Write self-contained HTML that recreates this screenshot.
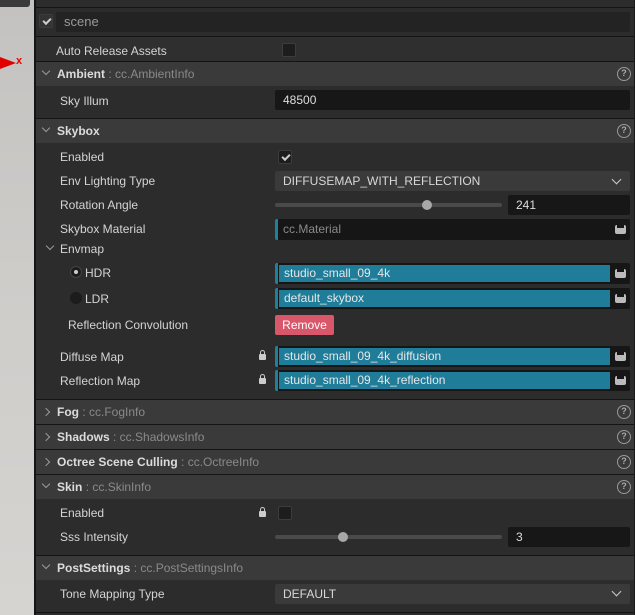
<!DOCTYPE html>
<html><head><meta charset="utf-8"><style>
*{box-sizing:border-box;margin:0;padding:0}
body{width:635px;height:615px;overflow:hidden;background:#2c2c2c;font-family:"Liberation Sans",sans-serif;font-size:12px;color:#d4d4d4;position:relative}
.a{position:absolute}
.strip{left:0;top:0;width:34px;height:615px;background:linear-gradient(#c3c2c0,#cfcdca 50%,#d6d4d1)}
.vl{left:34px;top:0;width:2px;height:615px;background:#151515}
.panel{left:36px;top:0;width:598px;height:615px;background:#2c2c2c}
.rb{left:634px;top:0;width:1px;height:615px;background:#1a1a1a}
.hl{left:36px;width:598px;height:1px;background:#141414}
.hdr{left:36px;width:598px;height:24px;background:#3a3a3a}
.ht{left:57px;font-weight:bold;color:#dcdcdc;font-size:12px;line-height:24px}
.ht span{font-weight:normal;color:#8a8a8a}
.car{left:43px;width:6px;height:6px;border-right:1.5px solid #999;border-bottom:1.5px solid #999}
.q{left:617px;width:14px;height:14px;border:1.5px solid #999;border-radius:50%;color:#aaa;font-size:9px;line-height:11px;text-align:center;font-weight:bold}
.lb{left:60px;line-height:16px}
.cb{width:14px;height:14px;background:#1d1d1d;border:1px solid #3c3c3c;border-radius:2px}
.inp{background:#171717;border-radius:2px;line-height:20px;padding-left:8px;height:20px}
.sel{background:#3a3a3a;border-radius:2px;line-height:20px;padding-left:8px;height:20px;color:#d8d8d8}
.asset{height:21px;background:#161616;border-left:3px solid #1f7f9e;border-radius:2px}
.asset .f{position:absolute;left:1px;top:2px;height:17px;right:20px;background:#1f7d9a;color:#e6e6e6;line-height:17px;padding-left:5px}
.asset .bx{position:absolute;right:4px;top:6px;width:11px;height:9px;border-radius:2px;background:#bbb}
.asset .bx:after{content:"";position:absolute;left:2px;top:0;width:7px;height:3px;background:#161616}
.lock{width:7px;height:6px;background:#ccc;border-radius:1px}
.lock:before{content:"";position:absolute;left:1px;top:-4px;width:3px;height:4px;border:1.2px solid #ccc;border-bottom:none;border-radius:3px 3px 0 0}
.chk:after{content:"";position:absolute;left:3px;width:6px;height:3px;border-left:2px solid #ccc;border-bottom:2px solid #ccc;transform:rotate(-45deg);top:3px}
.track{height:4px;background:#4a4a4a;border-radius:2px}
.knob{width:10px;height:10px;border-radius:50%;background:#a8a8a8}
.dd{width:7px;height:7px;border-right:1.5px solid #ccc;border-bottom:1.5px solid #ccc;transform:rotate(45deg)}
</style></head><body>
<div class="a strip"></div>
<div class="a" style="left:0;top:0;width:30px;height:7px;background:#3a3a3a;border-radius:0 0 3px 0"></div>
<div class="a" style="left:0;top:57px;width:0;height:0;border-top:6px solid transparent;border-bottom:6px solid transparent;border-left:16px solid #e00000"></div>
<div class="a" style="left:16px;top:55px;color:#e00;font-weight:bold;font-size:11px">x</div>
<div class="a vl"></div>
<div class="a panel"></div>
<div class="a rb"></div>

<div class="a hl" style="top:7px"></div>
<div class="a cb chk" style="left:39px;top:14px;background:#333"></div>
<div class="a inp" style="left:56px;top:12px;width:574px;background:#232323;color:#9a9a9a;font-size:13px">scene</div>
<div class="a hl" style="top:36px"></div>
<div class="a" style="left:36px;top:37px;width:598px;height:24px;background:#2f2f2f"></div>
<div class="a lb" style="left:56px;top:43px">Auto Release Assets</div>
<div class="a cb" style="left:282px;top:43px"></div>

<div class="a hl" style="top:61px"></div>
<div class="a hdr" style="top:62px"></div>
<div class="a car" style="top:68px;transform:rotate(45deg)"></div>
<div class="a ht" style="top:62px">Ambient <span>: cc.AmbientInfo</span></div>
<div class="a q" style="top:67px">?</div>
<div class="a lb" style="top:93px">Sky Illum</div>
<div class="a inp" style="left:275px;top:90px;width:355px;color:#ddd">48500</div>

<div class="a hl" style="top:118px"></div>
<div class="a hdr" style="top:119px"></div>
<div class="a car" style="top:125px;transform:rotate(45deg)"></div>
<div class="a ht" style="top:119px">Skybox</div>
<div class="a q" style="top:124px">?</div>

<div class="a lb" style="top:149px">Enabled</div>
<div class="a cb chk" style="left:278px;top:150px"></div>
<div class="a lb" style="top:173px">Env Lighting Type</div>
<div class="a sel" style="left:275px;top:171px;width:355px">DIFFUSEMAP_WITH_REFLECTION</div>
<div class="a dd" style="left:613px;top:176px"></div>
<div class="a lb" style="top:197px">Rotation Angle</div>
<div class="a track" style="left:275px;top:203px;width:227px"></div>
<div class="a knob" style="left:422px;top:200px"></div>
<div class="a inp" style="left:508px;top:195px;width:122px;color:#ddd">241</div>
<div class="a lb" style="top:221px">Skybox Material</div>
<div class="a asset" style="left:275px;top:219px;width:355px;background:#161616"><div style="position:absolute;left:5px;top:2px;line-height:16px;color:#8a8a8a">cc.Material</div><div class="bx"></div></div>

<div class="a car" style="left:47px;top:243px;transform:rotate(45deg)"></div>
<div class="a lb" style="left:60px;top:241px">Envmap</div>
<div class="a" style="left:70px;top:266px;width:12px;height:12px;border-radius:50%;background:#1c1c1c;border:1px solid #444"></div>
<div class="a" style="left:74px;top:270px;width:4px;height:4px;border-radius:50%;background:#ccc"></div>
<div class="a lb" style="left:85px;top:265px">HDR</div>
<div class="a asset" style="left:275px;top:263px;width:355px"><div class="f">studio_small_09_4k</div><div class="bx"></div></div>
<div class="a" style="left:70px;top:292px;width:12px;height:12px;border-radius:50%;background:#1c1c1c"></div>
<div class="a lb" style="left:85px;top:291px">LDR</div>
<div class="a asset" style="left:275px;top:288px;width:355px"><div class="f">default_skybox</div><div class="bx"></div></div>
<div class="a lb" style="left:68px;top:317px">Reflection Convolution</div>
<div class="a" style="left:275px;top:315px;width:59px;height:20px;background:#d9576a;border-radius:2px;color:#fff;text-align:center;line-height:20px">Remove</div>

<div class="a lb" style="top:349px">Diffuse Map</div>
<div class="a lock" style="left:259px;top:354px"></div>
<div class="a asset" style="left:275px;top:346px;width:355px"><div class="f">studio_small_09_4k_diffusion</div><div class="bx"></div></div>
<div class="a lb" style="top:373px">Reflection Map</div>
<div class="a lock" style="left:259px;top:378px"></div>
<div class="a asset" style="left:275px;top:370px;width:355px"><div class="f">studio_small_09_4k_reflection</div><div class="bx"></div></div>

<div class="a hl" style="top:399px"></div>
<div class="a hdr" style="top:400px"></div>
<div class="a car" style="top:409px;transform:rotate(-45deg)"></div>
<div class="a ht" style="top:400px">Fog <span>: cc.FogInfo</span></div>
<div class="a q" style="top:405px">?</div>
<div class="a hl" style="top:424px"></div>
<div class="a hdr" style="top:425px"></div>
<div class="a car" style="top:434px;transform:rotate(-45deg)"></div>
<div class="a ht" style="top:425px">Shadows <span>: cc.ShadowsInfo</span></div>
<div class="a q" style="top:430px">?</div>
<div class="a hl" style="top:449px"></div>
<div class="a hdr" style="top:450px"></div>
<div class="a car" style="top:459px;transform:rotate(-45deg)"></div>
<div class="a ht" style="top:450px">Octree Scene Culling <span>: cc.OctreeInfo</span></div>
<div class="a q" style="top:455px">?</div>
<div class="a hl" style="top:474px"></div>
<div class="a hdr" style="top:475px"></div>
<div class="a car" style="top:481px;transform:rotate(45deg)"></div>
<div class="a ht" style="top:475px">Skin <span>: cc.SkinInfo</span></div>
<div class="a q" style="top:480px">?</div>
<div class="a lb" style="top:505px">Enabled</div>
<div class="a lock" style="left:259px;top:511px"></div>
<div class="a cb" style="left:278px;top:506px"></div>
<div class="a lb" style="top:529px">Sss Intensity</div>
<div class="a track" style="left:275px;top:535px;width:227px"></div>
<div class="a knob" style="left:338px;top:532px"></div>
<div class="a inp" style="left:508px;top:527px;width:122px;color:#ddd">3</div>

<div class="a hl" style="top:555px"></div>
<div class="a hdr" style="top:556px"></div>
<div class="a car" style="top:562px;transform:rotate(45deg)"></div>
<div class="a ht" style="top:556px">PostSettings <span>: cc.PostSettingsInfo</span></div>
<div class="a lb" style="top:586px">Tone Mapping Type</div>
<div class="a sel" style="left:275px;top:584px;width:355px">DEFAULT</div>
<div class="a dd" style="left:613px;top:588px"></div>
<div class="a hl" style="top:612px"></div>
</body></html>
